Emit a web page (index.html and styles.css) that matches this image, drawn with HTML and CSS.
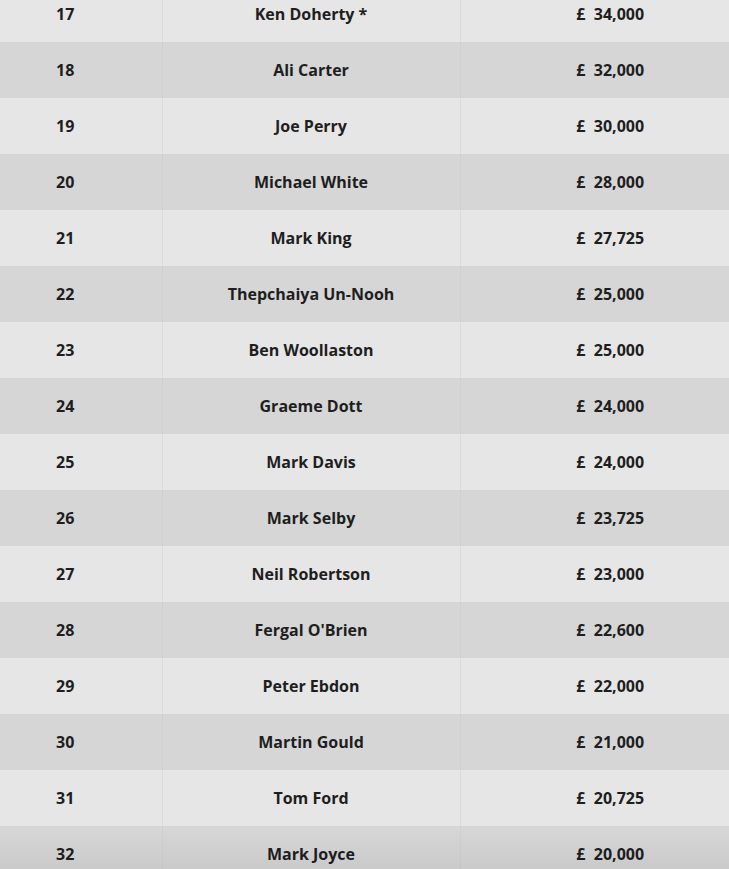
FILE: index.html
```html
<!DOCTYPE html>
<html>
<head>
<meta charset="utf-8">
<link rel="stylesheet" href="styles.css">
</head>
<body>
<div class="wrap">
<table class="prize">
<colgroup><col class="c1"><col class="c2"><col class="c3"></colgroup>
<tbody>
<tr><td>17</td><td>Ken Doherty *</td><td>£&nbsp;&nbsp;34,000</td></tr>
<tr><td>18</td><td>Ali Carter</td><td>£&nbsp;&nbsp;32,000</td></tr>
<tr><td>19</td><td>Joe Perry</td><td>£&nbsp;&nbsp;30,000</td></tr>
<tr><td>20</td><td>Michael White</td><td>£&nbsp;&nbsp;28,000</td></tr>
<tr><td>21</td><td>Mark King</td><td>£&nbsp;&nbsp;27,725</td></tr>
<tr><td>22</td><td>Thepchaiya Un-Nooh</td><td>£&nbsp;&nbsp;25,000</td></tr>
<tr><td>23</td><td>Ben Woollaston</td><td>£&nbsp;&nbsp;25,000</td></tr>
<tr><td>24</td><td>Graeme Dott</td><td>£&nbsp;&nbsp;24,000</td></tr>
<tr><td>25</td><td>Mark Davis</td><td>£&nbsp;&nbsp;24,000</td></tr>
<tr><td>26</td><td>Mark Selby</td><td>£&nbsp;&nbsp;23,725</td></tr>
<tr><td>27</td><td>Neil Robertson</td><td>£&nbsp;&nbsp;23,000</td></tr>
<tr><td>28</td><td>Fergal O'Brien</td><td>£&nbsp;&nbsp;22,600</td></tr>
<tr><td>29</td><td>Peter Ebdon</td><td>£&nbsp;&nbsp;22,000</td></tr>
<tr><td>30</td><td>Martin Gould</td><td>£&nbsp;&nbsp;21,000</td></tr>
<tr><td>31</td><td>Tom Ford</td><td>£&nbsp;&nbsp;20,725</td></tr>
<tr><td>32</td><td>Mark Joyce</td><td>£&nbsp;&nbsp;20,000</td></tr>
</tbody>
</table>
</div>
<div class="fade"></div>
</body>
</html>
```
FILE: styles.css
```css
html, body {
  margin: 0;
  padding: 0;
  background: #e6e6e6;
  overflow: hidden;
}
.wrap {
  margin-top: -14px;
  margin-left: -31px;
  width: 791px;
}
.prize {
  width: 791px;
  border-collapse: collapse;
  table-layout: fixed;
  font-family: "Open Sans", "Noto Sans", sans-serif;
  font-weight: 700;
  font-size: 16px;
  color: #1e1e1e;
}
.c1 { width: 193px; }
.c2 { width: 298px; }
.c3 { width: 300px; }
.prize td {
  height: 56px;
  padding: 0 0 1px 0;
  text-align: center;
  vertical-align: middle;
  border-left: 1px solid #dadada;
  box-sizing: border-box;
}
.prize td:first-child { border-left: none; }
.prize tr:nth-child(odd) td { background: #e6e6e6; }
.prize tr:nth-child(even) td { background: #d6d6d6; }
.prize tr:nth-child(even) td { border-left-color: #d0d0d0; }
.fade {
  position: fixed;
  left: 0;
  right: 0;
  bottom: 0;
  height: 40px;
  background: linear-gradient(to bottom, rgba(0,0,0,0), rgba(0,0,0,0.05));
  pointer-events: none;
}
```
